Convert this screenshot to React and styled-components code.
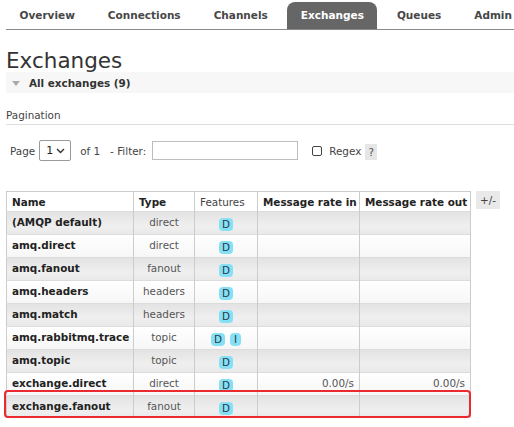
import React from 'react'
import styled, { createGlobalStyle } from 'styled-components';

const GlobalStyle = createGlobalStyle`
    body {
        margin: 0;
        background: #fff;
        color: #444;
        font-family: "DejaVu Sans", Verdana, sans-serif;
        font-size: 10.4px;
        overflow: hidden;
    }
`;

const tabs = ['Overview', 'Connections', 'Channels', 'Exchanges', 'Queues', 'Admin'];

const rows = [
    { name: '(AMQP default)', type: 'direct', features: ['D'] },
    { name: 'amq.direct', type: 'direct', features: ['D'] },
    { name: 'amq.fanout', type: 'fanout', features: ['D'] },
    { name: 'amq.headers', type: 'headers', features: ['D'] },
    { name: 'amq.match', type: 'headers', features: ['D'] },
    { name: 'amq.rabbitmq.trace', type: 'topic', features: ['D', 'I'] },
    { name: 'amq.topic', type: 'topic', features: ['D'] },
    { name: 'exchange.direct', type: 'direct', features: ['D'], rateIn: '0.00/s', rateOut: '0.00/s' },
    { name: 'exchange.fanout', type: 'fanout', features: ['D'] },
];

const App = () => {
    return (
        <Page>
            <GlobalStyle />
            <Nav>
                {tabs.map((t) => (
                    <Tab key={t} $active={t === 'Exchanges'}>{t}</Tab>
                ))}
            </Nav>
            <Title>Exchanges</Title>
            <Band>
                <Triangle />
                All exchanges (9)
            </Band>
            <SectionLabel>Pagination</SectionLabel>
            <Pager>
                <span>Page</span>
                <SelectBox>
                    1
                    <svg width="9" height="6" viewBox="0 0 9 6">
                        <path d="M1 1l3.5 3.5L8 1" fill="none" stroke="#333" strokeWidth="1.4" />
                    </svg>
                </SelectBox>
                <Text $ml={9}>of 1</Text>
                <Text $ml={10}>- Filter:</Text>
                <FilterInput />
                <CheckBox />
                <Text $ml={7}>Regex</Text>
                <Help>?</Help>
            </Pager>
            <TableRow>
                <TableWrap>
                    <Table>
                        <colgroup>
                            <col style={{ width: 127 }} />
                            <col style={{ width: 61 }} />
                            <col style={{ width: 63 }} />
                            <col style={{ width: 102 }} />
                            <col style={{ width: 111 }} />
                        </colgroup>
                        <thead>
                            <tr>
                                <Th>Name</Th>
                                <Th>Type</Th>
                                <Th $light>Features</Th>
                                <Th>Message rate in</Th>
                                <Th>Message rate out</Th>
                            </tr>
                        </thead>
                        <tbody>
                            {rows.map((r, i) => (
                                <Tr key={r.name} $alt={i % 2 === 0}>
                                    <NameCell>{r.name}</NameCell>
                                    <TypeCell>{r.type}</TypeCell>
                                    <Td>
                                        <Badges>
                                            {r.features.map((f) => <Badge key={f}>{f}</Badge>)}
                                        </Badges>
                                    </Td>
                                    <RateCell>{r.rateIn}</RateCell>
                                    <RateCell>{r.rateOut}</RateCell>
                                </Tr>
                            ))}
                        </tbody>
                    </Table>
                    <Highlight />
                </TableWrap>
                <Toggle>+/-</Toggle>
            </TableRow>
        </Page>
    )
}

const Page = styled.div`
    padding-left: 6px;
`;

const Nav = styled.nav`
    display: flex;
    padding-top: 2px;
    border-bottom: 1px solid #8a8a8a;
    overflow: hidden;
    white-space: nowrap;
`;

const Tab = styled.div`
    flex-shrink: 0;
    height: 27px;
    line-height: 27px;
    padding: 0 13.5px;
    margin-right: 6px;
    font-size: 10.5px;
    font-weight: 700;
    color: ${(p) => (p.$active ? '#fff' : '#474747')};
    background: ${(p) => (p.$active ? '#666' : 'transparent')};
    border-radius: 8px 8px 0 0;
`;

const Title = styled.h1`
    margin: 19px 0 0;
    font-size: 21.5px;
    font-weight: 400;
    line-height: 23px;
    color: #333;
`;

const Band = styled.div`
    display: flex;
    align-items: center;
    height: 21px;
    padding-left: 5px;
    background: #f7f7f7;
    font-weight: 700;
    color: #333;
`;

const Triangle = styled.span`
    width: 0;
    height: 0;
    margin: 1px 9px 0 1px;
    border-left: 4px solid transparent;
    border-right: 4px solid transparent;
    border-top: 5px solid #aaa;
`;

const SectionLabel = styled.div`
    margin-top: 16px;
    line-height: 13px;
    padding-bottom: 2px;
    border-bottom: 1px solid #ddd;
    color: #444;
`;

const Pager = styled.div`
    display: flex;
    align-items: center;
    height: 21px;
    margin-top: 15px;
    padding-left: 4px;
    color: #444;
`;

const Text = styled.span`
    margin-left: ${(p) => p.$ml || 0}px;
`;

const SelectBox = styled.div`
    display: flex;
    align-items: center;
    justify-content: space-between;
    box-sizing: border-box;
    width: 32px;
    height: 21px;
    margin-left: 4px;
    padding: 0 5px 0 6px;
    border: 1px solid #9a9a9a;
    border-radius: 2px;
    font-size: 11px;
    color: #222;
`;

const FilterInput = styled.div`
    box-sizing: border-box;
    width: 146px;
    height: 19px;
    margin-left: 6px;
    border: 1px solid #bdbdbd;
`;

const CheckBox = styled.span`
    box-sizing: border-box;
    width: 10px;
    height: 10px;
    margin-left: 14px;
    border: 1px solid #444;
    border-radius: 2px;
`;

const Help = styled.span`
    display: flex;
    align-items: center;
    justify-content: center;
    width: 12px;
    height: 16px;
    margin-left: 4px;
    margin-top: 2px;
    background: #e6e6e6;
    color: #555;
`;

const TableRow = styled.div`
    display: flex;
    align-items: flex-start;
    gap: 5px;
    margin-top: 30px;
`;

const TableWrap = styled.div`
    position: relative;
`;

const Table = styled.table`
    width: 464px;
    table-layout: fixed;
    border-collapse: collapse;
    border-top: 1px solid #ccc;
    border-left: 1px solid #ccc;
`;

const Th = styled.th`
    height: 19px;
    padding: 0 5px;
    text-align: left;
    white-space: nowrap;
    font-weight: ${(p) => (p.$light ? 400 : 700)};
    color: ${(p) => (p.$light ? '#444' : '#222')};
    background: #fff;
    border-right: 1px solid #ccc;
`;

const Tr = styled.tr`
    background: ${(p) => (p.$alt
        ? 'linear-gradient(#e3e3e3, #efefef 60%, #e9e9e9)'
        : 'linear-gradient(#fff, #f6f6f6)')};
`;

const Td = styled.td`
    height: 19px;
    padding: 3px 5px 0;
    vertical-align: top;
    line-height: 14px;
    border-right: 1px solid #ccc;
    border-top: 1px solid #dcdcdc;
    white-space: nowrap;
`;

const NameCell = styled(Td)`
    font-weight: 700;
    color: #222;
`;

const TypeCell = styled(Td)`
    text-align: center;
    color: #555;
`;

const RateCell = styled(Td)`
    text-align: right;
    color: #555;
`;

const Badges = styled.div`
    display: flex;
    justify-content: center;
    gap: 5px;
    padding-top: 3px;
`;

const Badge = styled.span`
    display: inline-block;
    min-width: 11px;
    height: 13px;
    line-height: 13px;
    padding: 0 3px;
    box-sizing: border-box;
    text-align: center;
    border-radius: 4px;
    background: #86e0f5;
    color: #2b3a44;
    font-size: 10.4px;
`;

const Highlight = styled.div`
    position: absolute;
    left: -2px;
    top: 199px;
    width: 467px;
    height: 28px;
    box-sizing: border-box;
    border: 2.5px solid #ea2a2f;
    border-radius: 4px;
    pointer-events: none;
`;

const Toggle = styled.div`
    width: 24px;
    height: 18px;
    line-height: 18px;
    text-align: center;
    background: #e9e9e9;
    color: #444;
`;

export default App
